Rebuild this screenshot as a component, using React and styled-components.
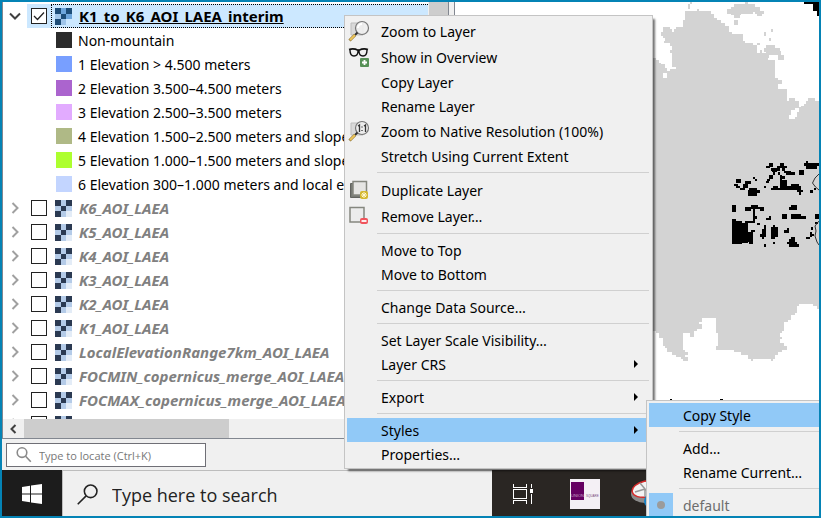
import React, { useState } from 'react';
import styled, { createGlobalStyle, css } from 'styled-components';

const GlobalStyle = createGlobalStyle`
  * { box-sizing: border-box; }
  body {
    margin: 0;
    font-family: "Noto Sans", "Open Sans", sans-serif;
    font-size: 14px;
    color: #000;
  }
  button, input { font: inherit; color: inherit; }
  ul { list-style: none; margin: 0; padding: 0; }
`;

const Frame = styled.div`
  position: relative;
  display: flex;
  flex-direction: column;
  height: 100vh;
  overflow: hidden;
  border: 2px solid #0483b5;
  background: #f0f0f0;
`;

const Workspace = styled.main`
  display: flex;
  flex: 1;
  min-height: 0;
`;

const LayersPanel = styled.section`
  display: flex;
  flex-direction: column;
  flex: 0 0 447px;
  border: solid #828790;
  border-width: 0 1px 1px;
  background: #fff;
`;

const LayersBody = styled.div`
  display: flex;
  flex: 1;
  min-height: 0;
`;

const Tree = styled.ul`
  flex: 1;
  min-width: 0;
  overflow: hidden;
  padding-top: 2px;
`;

const TreeRow = styled.li`
  display: flex;
  align-items: center;
  height: 24px;
  white-space: nowrap;
`;

const LegendRow = styled(TreeRow)`
  gap: 6px;
  padding-left: 53px;
`;

const Expander = styled.button`
  display: grid;
  place-items: center;
  width: 24px;
  height: 24px;
  padding: 0;
  border: 0;
  background: none;
`;

const CheckCell = styled.label`
  display: grid;
  place-items: center;
  width: 24px;
  height: 24px;
  background: ${(p) => (p.$selected ? '#cce8ff' : 'transparent')};
`;

const Check = styled.input`
  grid-area: 1 / 1;
  appearance: none;
  width: 16px;
  height: 16px;
  margin: 0;
  border: 1px solid #222;
  background: #fff;
`;

const CheckMark = styled.svg`
  grid-area: 1 / 1;
  pointer-events: none;
`;

const LayerName = styled.span`
  display: flex;
  align-items: center;
  gap: 7px;
  flex: 1;
  height: 24px;
  padding-left: 4px;
  color: #808080;
  font-size: 15px;
  font-weight: 700;
  font-style: italic;
  ${(p) =>
    p.$selected &&
    css`
      padding-left: 3px;
      border: 1px dotted #000;
      border-right: 0;
      background: #cce8ff;
      color: #000;
      font-style: normal;
      text-decoration: underline;
    `}
`;

const Swatch = styled.span`
  width: 16px;
  height: 16px;
  background: ${(p) => p.$color};
`;

const VerticalBar = styled.div`
  width: 20px;
  border-left: 1px solid #f0f0f0;
  background: #cdcdcd;
`;

const HorizontalBar = styled.div`
  display: flex;
  height: 19px;
  background: #f0f0f0;
`;

const ScrollArrow = styled.button`
  display: grid;
  place-items: center;
  width: 21px;
  padding: 0 2px 0 0;
  border: 0;
  background: #f0f0f0;
`;

const ScrollThumb = styled.div`
  width: 205px;
  background: #cdcdcd;
`;

const Splitter = styled.div`
  width: 6px;
  border-right: 1px solid #828790;
  background: #f0f0f0;
`;

const MapCanvas = styled.section`
  flex: 1;
  min-width: 0;
  overflow: hidden;
  background: #fff;
`;

const MapDrawing = styled.svg`
  display: block;
`;

const LocatorBar = styled.div`
  display: flex;
  align-items: flex-start;
  height: 31px;
  padding: 4px;
`;

const LocatorField = styled.label`
  display: flex;
  align-items: center;
  gap: 7px;
  width: 200px;
  height: 24px;
  padding-left: 9px;
  border: 1px solid #6f6f76;
  background: #fff;
`;

const LocatorInput = styled.input`
  flex: 1;
  min-width: 0;
  padding: 0;
  border: 0;
  outline: 0;
  background: none;
  font-family: "Open Sans", sans-serif;
  font-size: 11px;
  &::placeholder { color: #777; opacity: 1; }
`;

const Taskbar = styled.footer`
  display: flex;
  height: 46px;
  background: #2a2623;
`;

const StartButton = styled.button`
  display: grid;
  place-items: center;
  width: 60px;
  padding: 2px 0 0;
  border: 0;
  background: #1c1c1c;
`;

const SearchField = styled.label`
  display: flex;
  align-items: center;
  gap: 14px;
  width: 430px;
  padding: 2px 0 0 14px;
  border: solid #bdbdbd;
  border-width: 1px 0 0 1px;
  background: #f0f0f0;
`;

const SearchInput = styled.input`
  flex: 1;
  min-width: 0;
  padding: 0;
  border: 0;
  outline: 0;
  background: none;
  font-family: "Open Sans", sans-serif;
  font-size: 18px;
  &::placeholder { color: #222; opacity: 1; }
`;

const Apps = styled.div`
  display: flex;
`;

const AppButton = styled.button`
  display: grid;
  place-items: center;
  width: 62px;
  padding: 2px 0 0;
  border: 0;
  background: none;
`;

const Menu = styled.div`
  position: absolute;
  padding: 2px;
  border: 1px solid #c4c4c4;
  background: #f0f0f0;
`;

const ContextMenu = styled(Menu)`
  left: 342px;
  top: 13px;
  width: 309px;
  box-shadow: 3px 3px 2px -1px rgba(0, 0, 0, 0.55);
`;

const StyleMenu = styled(Menu)`
  left: 644px;
  top: 398px;
  width: 190px;
`;

const Item = styled.button`
  display: flex;
  align-items: center;
  width: 100%;
  height: ${(p) => (p.$tall ? 26 : 24)}px;
  padding: 0 12px 0 0;
  border: 0;
  background: ${(p) => (p.$active ? '#91c9f7' : 'transparent')};
  text-align: left;
  white-space: nowrap;
  &:disabled { color: #6d6d6d; }
`;

const ItemIcon = styled.span`
  display: grid;
  place-items: center;
  width: 24px;
  height: 24px;
  margin-right: 10px;
  background: ${(p) => (p.$checked ? '#91c9f7' : 'transparent')};
`;

const ItemLabel = styled.span`
  flex: 1;
`;

const Separator = styled.hr`
  height: 1px;
  margin: 4px 1px 4px 30px;
  border: 0;
  background: #d0d0d0;
`;

function Chevron({ open }) {
  return (
    <svg width="12" height="12" viewBox="0 0 12 12" fill="none" stroke={open ? '#404040' : '#a0a0a0'} strokeWidth="2">
      <path d={open ? 'M1 3.5l5 5 5-5' : 'M3.5 1l5 5-5 5'} />
    </svg>
  );
}

function RasterIcon({ active }) {
  const dark = active ? '#1d4d78' : '#2b3a52';
  const mid = active ? '#6ea6dc' : '#b4cbe8';
  const pale = active ? '#9fc5ea' : '#b4cbe8';
  const cells = [dark, mid, dark, pale, dark, mid, dark, pale, active ? '#cce8ff' : '#e3ecf7'];
  const start = [0, 6, 11];
  const size = [6, 5, 6];
  return (
    <svg width="17" height="17" shapeRendering="crispEdges">
      {cells.map((fill, i) => (
        <rect key={i} x={start[i % 3]} y={start[Math.floor(i / 3)]} width={size[i % 3]} height={size[Math.floor(i / 3)]} fill={fill} />
      ))}
    </svg>
  );
}

function LayerZoomIcon({ native }) {
  return (
    <svg width="22" height="22" viewBox="0 0 22 22">
      <path d="M3 3h12v12H3z" fill="#d9d9d9" stroke="#bdbdbd" />
      <circle cx="14" cy="8" r="6.5" fill="#eee" fillOpacity=".9" stroke="#777" strokeWidth="1.2" />
      {native ? (
        <path d="M10 6l1.5-1v7M14 6.5v1M14 10v1M16 6l1.500-1v7" fill="none" stroke="#333" strokeWidth="1.300" />
      ) : (
        <path d="M10 8a4 4 0 0 1 4-4" fill="none" stroke="#fff" strokeWidth="2" />
      )}
      <path d="M9.500 12.500l-3 3" stroke="#333" strokeWidth="2" />
      <path d="M7 15l-5.500 5.500" stroke="#8d7338" strokeWidth="3" />
      <path d="M7 15l-5 5" stroke="#edc65a" strokeWidth="2" />
    </svg>
  );
}

function GlassesIcon() {
  return (
    <svg width="22" height="22" viewBox="0 0 22 22">
      <path d="M1 3.500c3-1 6-.8 9 .7h1c3-1.500 6-1.700 9-.7" fill="none" stroke="#111" strokeWidth="1.800" />
      <path d="M2 4c0 4 1 6 4 6s4-2 4-5M11 5c0 3 1 5 4 5s4-2 4-6" fill="none" stroke="#111" strokeWidth="1.400" />
      <rect x="12" y="12" width="9" height="9" rx="1" fill="#579157" />
      <path d="M16.500 14v5M14 16.500h5" stroke="#fff" strokeWidth="1.800" />
    </svg>
  );
}

function DuplicateIcon() {
  return (
    <svg width="22" height="22" viewBox="0 0 22 22">
      <path d="M2.500 4.500h12v14h-12z" fill="#777a74" stroke="#62645f" />
      <path d="M5 2.500h13.500V16H5z" fill="#e5e5e3" stroke="#85877f" strokeWidth="1.500" />
      <rect x="12" y="12" width="8" height="8" rx="2" fill="#d4b72f" />
      <path d="M16 13v6M13 16h6M14 14l4 4M18 14l-4 4" stroke="#fff7d2" strokeWidth="1" />
    </svg>
  );
}

function RemoveIcon() {
  return (
    <svg width="22" height="22" viewBox="0 0 22 22">
      <path d="M2 2.500h14V17H2z" fill="#ececec" stroke="#85877f" strokeWidth="1.500" />
      <rect x="12" y="13" width="8" height="6" rx="2" fill="#f0545c" />
      <path d="M13.500 16h5" stroke="#fff" strokeWidth="1.800" />
    </svg>
  );
}

function Magnifier({ size, color, flip, width }) {
  return (
    <svg width={size} height={size} viewBox="0 0 20 20" fill="none" stroke={color} strokeWidth={width}>
      <circle cx={flip ? 13 : 7.5} cy="7" r="6" />
      <path d={flip ? 'M8.700 11.300L.7 19.300' : 'M12 11.500l6.500 7'} />
    </svg>
  );
}

const LAND =
  'M650 58H656V60H659V63H661V64H665V68H667V73H663V78H667V71H670V69H676V67H672V53H670V50H672V46H670V43H664V41H665V38H663V36H661V32H663V27H670V29H672V32H674V29H676V27H683V20H685V11H711V14H714V18H717V20H721V23H725V26H729V32H732V34H743V41H745V43H753V45H757V53H766V58H768V60H775V78H778V80H782V84H778V89H787V101H789V98H795V101H799V108H795V110H791V115H789V119H795V117H797V112H799V107H801V106H804V104H806V101H808V98H815V101H819V309H817V306H813V304H799V306H797V313H795V315H791V320H788V322H784V331H782V333H780V337H782V339H780V343H784V346H787V350H782V352H778V355H775V359H773V361H771V359H753V361H751V359H748V355H741V352H734V350H716V346H718V333H716V318H702V322H699V324H702V329H697V331H694V337H690V333H683V350H685V352H688V355H685V357H688V361H683V359H681V357H676V355H672V352H667V348H665V346H663V338H659V333H656V331H650Z';

const ISLANDS = [
  [690, 2, 2, 2], [688, 4, 2, 5], [697, 9, 2, 2], [745, 2, 3, 2], [734, 4, 21, 5], [731, 7, 6, 2],
  [727, 9, 26, 5], [755, 7, 5, 4], [752, 9, 5, 3], [755, 11, 9, 3], [757, 14, 5, 2], [731, 14, 10, 1],
  [734, 15, 6, 3], [734, 20, 4, 5], [764, 32, 2, 4], [771, 29, 2, 3], [769, 38, 2, 3], [757, 43, 3, 2],
  [760, 50, 2, 3], [766, 45, 9, 5], [764, 48, 16, 4], [766, 51, 15, 4], [778, 55, 6, 5], [766, 55, 3, 3],
];

const MOUNTAINS = [
  [806, 161, 2, 2], [804, 163, 15, 3], [806, 166, 11, 3], [799, 170, 5, 5],
  [769, 163, 4, 4], [766, 166, 4, 2], [771, 168, 9, 3], [772, 170, 5, 2], [773, 172, 2, 3],
  [780, 163, 4, 3], [777, 166, 10, 2], [782, 168, 3, 3], [784, 171, 7, 2], [786, 172, 9, 3], [778, 172, 2, 3],
  [780, 175, 2, 13], [782, 176, 3, 3], [782, 180, 5, 6], [769, 175, 4, 4], [767, 179, 3, 2], [766, 181, 3, 2], [764, 186, 2, 2],
  [771, 188, 20, 2], [773, 186, 5, 2], [780, 186, 10, 2], [791, 184, 8, 2], [789, 186, 12, 4], [797, 190, 6, 2], [799, 192, 2, 3],
  [810, 190, 3, 3], [814, 188, 2, 2],
  [736, 179, 5, 4], [734, 184, 4, 2], [736, 186, 4, 2], [740, 188, 5, 2], [745, 181, 6, 3], [743, 184, 5, 4], [753, 177, 2, 2], [755, 179, 2, 2],
  [749, 188, 8, 2], [748, 190, 12, 3], [748, 193, 9, 3],
  [732, 205, 4, 7], [751, 205, 7, 2], [745, 207, 19, 2], [745, 209, 6, 2], [760, 209, 4, 2], [753, 209, 2, 13], [755, 216, 2, 3],
  [732, 219, 4, 2], [745, 221, 10, 2], [757, 223, 3, 2], [732, 221, 10, 23], [742, 223, 6, 20], [748, 232, 5, 10], [749, 242, 4, 2], [751, 230, 4, 2],
  [769, 216, 2, 2], [766, 218, 5, 2], [782, 214, 5, 5], [791, 214, 10, 3], [791, 216, 15, 3], [791, 205, 6, 3], [789, 207, 8, 3], [815, 214, 4, 5],
  [764, 225, 2, 12], [762, 229, 4, 8], [760, 234, 2, 3], [762, 237, 2, 2], [773, 225, 2, 2], [771, 227, 7, 10], [771, 237, 4, 2],
  [787, 228, 2, 2], [784, 230, 5, 3], [791, 237, 4, 2], [789, 239, 6, 3], [787, 242, 10, 2], [789, 244, 10, 3], [764, 244, 2, 3], [773, 242, 2, 2],
  [811, 227, 2, 3], [810, 232, 2, 5], [808, 237, 2, 2], [806, 237, 2, 2], [812, 234, 2, 2], [815, 222, 3, 2],
  [670, 399, 2, 1], [720, 399, 3, 1], [804, 2, 15, 2], [813, 2, 6, 9], [817, 2, 2, 14],
];

function MapView() {
  return (
    <MapDrawing width="364" height="436" viewBox="455 2 364 436" role="img" aria-label="Mountain map">
      <g shapeRendering="crispEdges">
        <path d={LAND} fill="#d3d3d3" />
        {ISLANDS.map(([x, y, w, h], i) => <rect key={i} x={x} y={y} width={w} height={h} fill="#d3d3d3" />)}
        {MOUNTAINS.map(([x, y, w, h], i) => <rect key={i} x={x} y={y} width={w} height={h} />)}
      </g>
      <path d="M819 174l-4 4-2.500 5 3 4 3.500 3M819 221l-4 5 1 5-1 5 2 6 2 3" fill="none" stroke="#333" />
    </MapDrawing>
  );
}

const LEGEND = [
  ['#2b2b2b', 'Non-mountain'],
  ['#789fff', '1 Elevation > 4.500 meters'],
  ['#ab64ce', '2 Elevation 3.500–4.500 meters'],
  ['#e2abff', '3 Elevation 2.500–3.500 meters'],
  ['#afb986', '4 Elevation 1.500–2.500 meters and slope'],
  ['#adff2f', '5 Elevation 1.000–1.500 meters and slope'],
  ['#c3d5ff', '6 Elevation 300–1.000 meters and local elev'],
];

const LAYERS = [
  'K6_AOI_LAEA', 'K5_AOI_LAEA', 'K4_AOI_LAEA', 'K3_AOI_LAEA', 'K2_AOI_LAEA', 'K1_AOI_LAEA',
  'LocalElevationRange7km_AOI_LAEA', 'FOCMIN_copernicus_merge_AOI_LAEA', 'FOCMAX_copernicus_merge_AOI_LAEA', '',
];

const MENU = [
  { label: 'Zoom to Layer', icon: <LayerZoomIcon /> },
  { label: 'Show in Overview', icon: <GlassesIcon /> },
  { label: 'Copy Layer' },
  { label: 'Rename Layer' },
  { label: 'Zoom to Native Resolution (100%)', icon: <LayerZoomIcon native /> },
  { label: 'Stretch Using Current Extent' },
  null,
  { label: 'Duplicate Layer', icon: <DuplicateIcon /> },
  { label: 'Remove Layer…', icon: <RemoveIcon /> },
  null,
  { label: 'Move to Top' },
  { label: 'Move to Bottom' },
  null,
  { label: 'Change Data Source…' },
  null,
  { label: 'Set Layer Scale Visibility…' },
  { label: 'Layer CRS', more: true },
  null,
  { label: 'Export', more: true },
  null,
  { label: 'Styles', more: true, active: true },
  { label: 'Properties…' },
];

const STYLE_MENU = [
  { label: 'Copy Style', active: true },
  null,
  { label: 'Add…' },
  { label: 'Rename Current…' },
  null,
  { label: 'default', disabled: true, checked: true },
];

function LayerRow({ name, selected }) {
  const [checked, setChecked] = useState(Boolean(selected));
  return (
    <TreeRow>
      <Expander aria-label={`Expand ${name}`}><Chevron open={selected} /></Expander>
      <CheckCell $selected={selected}>
        <Check type="checkbox" aria-label={name || 'Layer'} checked={checked} onChange={(e) => setChecked(e.target.checked)} />
        {checked && (
          <CheckMark width="12" height="12" viewBox="0 0 12 12" fill="none" stroke="#222" strokeWidth="1.300">
            <path d="M1 6l3.500 3.500L11 2.500" />
          </CheckMark>
        )}
      </CheckCell>
      <LayerName $selected={selected}>
        <RasterIcon active={selected} />
        {name}
      </LayerName>
    </TreeRow>
  );
}

function MenuItems({ items }) {
  return items.map((item, i) =>
    item ? (
      <Item key={i} role="menuitem" $tall={Boolean(item.icon)} $active={item.active} disabled={item.disabled}>
        <ItemIcon $checked={item.checked}>
          {item.icon}
          {item.checked && <svg width="8" height="8"><circle cx="4" cy="4" r="4" fill="#9b9b9b" /></svg>}
        </ItemIcon>
        <ItemLabel>{item.label}</ItemLabel>
        {item.more && <svg width="4" height="8"><path d="M0 0l4 4-4 4z" /></svg>}
      </Item>
    ) : (
      <Separator key={i} />
    )
  );
}

export default function App() {
  return (
    <Frame>
      <GlobalStyle />
      <Workspace>
        <LayersPanel>
          <LayersBody>
            <Tree>
              <LayerRow name="K1_to_K6_AOI_LAEA_interim" selected />
              {LEGEND.map(([color, text]) => (
                <LegendRow key={text}><Swatch $color={color} />{text}</LegendRow>
              ))}
              {LAYERS.map((name) => <LayerRow key={name} name={name} />)}
            </Tree>
            <VerticalBar />
          </LayersBody>
          <HorizontalBar>
            <ScrollArrow aria-label="Scroll left">
              <svg width="8" height="10" fill="none" stroke="#404040" strokeWidth="2"><path d="M6.500 1l-4 4 4 4" /></svg>
            </ScrollArrow>
            <ScrollThumb />
          </HorizontalBar>
        </LayersPanel>
        <Splitter />
        <MapCanvas><MapView /></MapCanvas>
      </Workspace>

      <LocatorBar>
        <LocatorField>
          <Magnifier size={16} color="#8a8a8a" width={2} />
          <LocatorInput aria-label="Locate" placeholder="Type to locate (Ctrl+K)" />
        </LocatorField>
      </LocatorBar>

      <Taskbar>
        <StartButton aria-label="Start">
          <svg width="20" height="20" viewBox="0 0 20 20" fill="#fff">
            <path d="M0 3l8-1.200V9.500H0zM9 1.600L20 0v9.500H9zM0 10.500h8v7.700L0 17zM9 10.500h11V20L9 18.400z" />
          </svg>
        </StartButton>
        <SearchField>
          <Magnifier size={21} color="#222" flip width={1.5} />
          <SearchInput aria-label="Search" placeholder="Type here to search" />
        </SearchField>
        <Apps>
          <AppButton aria-label="Task view">
            <svg width="20" height="20" viewBox="0 0 20 20" fill="none" stroke="#fff" shapeRendering="crispEdges">
              <path d="M.5 0v3.500h13V0M.5 20v-3.500h13V20M.5 5.500h13v9H.5zM18.500 0v4M18.500 10v10" />
              <path d="M17 5h3v4h-3z" fill="#fff" stroke="none" />
            </svg>
          </AppButton>
          <AppButton aria-label="Union Square">
            <svg width="30" height="30" viewBox="0 0 30 30">
              <path d="M0 0h30v30H0z" fill="#f4f0f5" />
              <path d="M1 3h13v18H1z" fill="#650061" />
              <text x="1" y="18" fontSize="4" fill="#c9a3ca" fontFamily="Liberation Sans, sans-serif">UNION</text>
              <text x="16" y="18" fontSize="3" fill="#7a4a80" fontFamily="Liberation Sans, sans-serif">SQUARE</text>
            </svg>
          </AppButton>
          <AppButton aria-label="Snipping tool">
            <svg width="32" height="28" viewBox="0 0 32 28">
              <ellipse cx="14" cy="14" rx="14" ry="9" fill="#8b8b8b" />
              <ellipse cx="15" cy="9" rx="14" ry="8" fill="#f3f3f3" stroke="#d52b2b" strokeWidth="1.500" transform="rotate(-12 15 9)" />
              <path d="M14 9L4 12M14 9L9 3M14 9v8M14 9l8 7" stroke="#999" strokeWidth="1.500" />
              <circle cx="20" cy="21" r="6" fill="none" stroke="#1680c4" strokeWidth="2" />
            </svg>
          </AppButton>
        </Apps>
      </Taskbar>

      <ContextMenu role="menu"><MenuItems items={MENU} /></ContextMenu>
      <StyleMenu role="menu"><MenuItems items={STYLE_MENU} /></StyleMenu>
    </Frame>
  );
}
